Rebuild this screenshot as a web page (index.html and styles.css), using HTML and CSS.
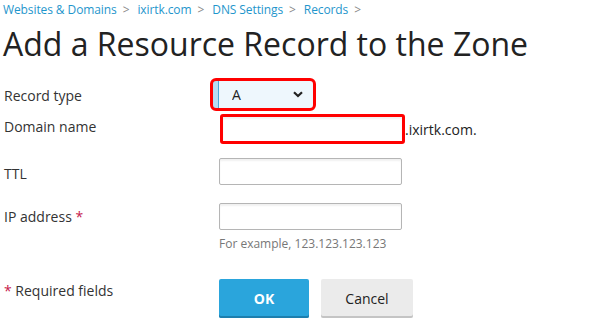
FILE: index.html
```html
<!DOCTYPE html>
<html lang="en">
<head>
<meta charset="UTF-8" />
<title>Add a Resource Record to the Zone</title>
<link rel="stylesheet" href="styles.css">
</head>
<body>

<div class="crumbs">
  <a href="#">Websites &amp; Domains</a><span class="sep">&gt;</span>
  <a href="#">ixirtk.com</a><span class="sep">&gt;</span>
  <a href="#">DNS Settings</a><span class="sep">&gt;</span>
  <a href="#">Records</a><span class="sep">&gt;</span>
</div>

<h1>Add a Resource Record to the Zone</h1>

<form class="form">
  <div class="row row-type">
    <label>Record type</label>
    <div class="field">
      <span class="select-wrap">
        <select class="select">
          <option>A</option>
        </select>
        <svg class="chev" width="10" height="7" viewBox="0 0 10 7"><path d="M1 1.2 L5 5 L9 1.2" fill="none" stroke="#222" stroke-width="2.2"/></svg>
      </span>
    </div>
  </div>

  <div class="row row-domain">
    <label>Domain name</label>
    <div class="field">
      <input type="text" class="input input-marked"><span class="suffix">.ixirtk.com.</span>
    </div>
  </div>

  <div class="row row-ttl">
    <label>TTL</label>
    <div class="field"><input type="text" class="input"></div>
  </div>

  <div class="row">
    <label>IP address <span class="req">*</span></label>
    <div class="field">
      <input type="text" class="input">
      <div class="hint">For example, 123.123.123.123</div>
    </div>
  </div>

  <div class="row row-buttons">
    <label><span class="req">*</span> Required fields</label>
    <div class="field buttons">
      <button type="button" class="btn btn-ok">OK</button>
      <button type="button" class="btn btn-cancel">Cancel</button>
    </div>
  </div>
</form>

</body>
</html>
```

FILE: styles.css
```css
body { margin: 0; padding: 0 3px; font-family: "Open Sans", Arial, sans-serif; color: #333; background: #fff; }

.crumbs { font-size: 12px; line-height: 18px; height: 19px; padding-top: 1px; letter-spacing: -0.1px; }
.crumbs a { color: #1f96cc; text-decoration: none; }
.crumbs .sep { color: #888; margin: 0 5px 0 6px; font-size: 12px; }

h1 { font-size: 32px; font-weight: 400; margin: 2px 0 15px; line-height: 44px; color: #222; }

.form { display: flex; flex-direction: column; }
.row { display: grid; grid-template-columns: 216px 1fr; align-items: start; margin-bottom: 17px; }
.row label { font-size: 14px; line-height: 27px; padding-left: 1px; }
.field { display: flex; flex-direction: column; align-items: flex-start; }

.row-type { margin-bottom: 5px; }
.row-type label { padding-top: 1px; }
.row-type .field { margin-left: -6px; }
.select-wrap { position: relative; display: inline-block; border-radius: 3px; outline: 3px solid #f00; outline-offset: 0; }
.select { appearance: none; -webkit-appearance: none; width: 100px; height: 27px; border: 0; border-left: 5px solid #b8ddf2; box-shadow: inset 1px 0 0 #4aa8d8; background: #eef7fd; font-family: inherit; font-size: 14px; color: #222; padding: 0 0 0 14px; border-radius: 0; display: block; }
.chev { position: absolute; right: 10px; top: 10px; pointer-events: none; }

.row-domain { margin-bottom: 14px; }
.row-domain .field { flex-direction: row; align-items: center; }
.row-domain label { line-height: 24px; padding-top: 1px; }
.row-ttl { margin-bottom: 16px; }
.row-ttl label { padding-top: 2px; }
.input { width: 183px; height: 27px; box-sizing: border-box; border: 1px solid #b5b5b5; border-radius: 2px; box-shadow: inset 0 2px 2px rgba(0,0,0,0.06); font-family: inherit; font-size: 13px; margin: 0; padding: 0 6px; }
.input-marked { width: 185px; height: 30px; border: 3px solid #f00; border-radius: 3px; margin-left: 1px; }
.suffix { font-size: 14px; color: #222; }

.hint { font-size: 12px; color: #777; margin-top: 5px; line-height: 17px; }

.req { color: #c6194b; }
.row-buttons { margin-top: 10px; }
.row-buttons label { line-height: 22px; margin-top: 1px; }
.buttons { flex-direction: row; gap: 12px; }
.btn { height: 39px; border: 0; border-radius: 2px; font-family: inherit; font-size: 14px; cursor: pointer; }
.btn-ok { width: 90px; background: #2aa5dc; color: #fff; font-weight: 700; box-shadow: inset 0 -2px 0 #1d7fae; }
.btn-cancel { width: 92px; background: #ebebeb; color: #222; box-shadow: inset 0 -2px 0 #c4c4c4; }
```
